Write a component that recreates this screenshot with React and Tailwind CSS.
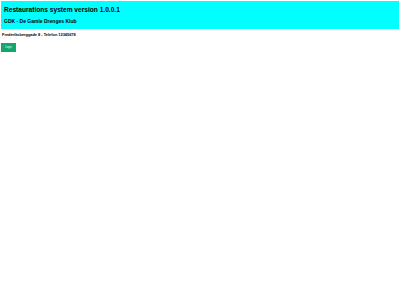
const App = () => {
  return (
    <div className="min-h-screen bg-white font-['Liberation_Sans',Arial,sans-serif] pt-[1px]">
      <div className="mx-[1px] h-[28px] bg-[#00ffff] px-[3px] pt-[4px]">
        <h1 className="text-[6.6px] font-bold leading-[9px] text-black">
          Restaurations system version 1.0.0.1
        </h1>
        <h2 className="mt-[4px] text-[5px] font-bold leading-[7px] text-black">
          GDK - De Gamle Drenges Klub
        </h2>
      </div>
      <p className="mt-[3px] px-[2px] text-[3.9px] font-bold leading-[6px] text-black">
        Frederiksberggade 8 - Telefon 12345678
      </p>
      <div className="mt-[5px] px-[1px]">
        <button className="flex h-[9px] w-[15px] items-center justify-center bg-[#13a66d] text-[2.6px] text-white">
          Login
        </button>
      </div>
    </div>
  );
};

export default App;
